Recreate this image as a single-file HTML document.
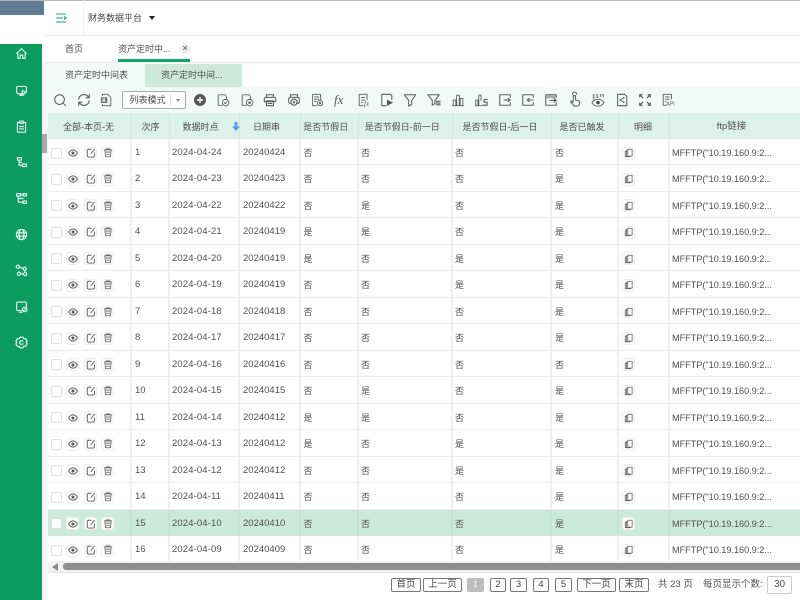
<!DOCTYPE html>
<html lang="zh"><head><meta charset="utf-8"><title>财务数据平台</title>
<style>
*{box-sizing:border-box}
html,body{margin:0;padding:0;width:800px;height:600px;overflow:hidden;background:#fff}
body{position:relative;font-family:"Liberation Sans","Noto Sans CJK SC",sans-serif;font-size:9px;color:#4f4f4f}
.a{position:absolute;white-space:nowrap}
svg{display:block;overflow:visible}
.s{fill:none;stroke:#5c5c5c;stroke-width:1;stroke-linecap:round;stroke-linejoin:round}
.w{fill:none;stroke:#e4f5ee;stroke-width:1.4;stroke-linecap:round;stroke-linejoin:round}
.tb{position:absolute;top:93px;width:14px;height:14px;margin-left:1px}
.nav{position:absolute;left:15px;width:13px;height:13px;margin-top:1.500px}
#hd,.r{position:absolute;left:48px;width:752px;display:flex}
#hd{top:113px;height:26px;background:#dcf1e9;color:#4f4f4f}
#hd span{display:block;height:26px;line-height:28px;text-align:center;border-right:1px solid #cfe5dc;flex:none}
.r{height:26.47px;background:#fff;border-bottom:1px solid #eee;line-height:28px;font-size:9.5px}
.r>span{display:block;flex:none;height:100%;border-right:2px solid #efefef;padding-left:3px}
.r.sel{background:#cbe9dd;border-bottom-color:#cbe9dd}
.r.sel>span{border-right-color:#c3e2d6}
.c1{width:84px}.c2{width:38px}.c3{width:70px}.c4{width:61px}.c5{width:57.500px}.c6{width:94.500px}.c7{width:99px}.c8{width:67px}.c9{width:51px}.c10{width:130px}
.r>span.c1{padding:0;position:relative}
.cb{position:absolute;left:3px;top:8.500px;width:11px;height:11px;border:1px solid #e0e0e0;border-radius:2px;background:#fff}
.b{position:absolute;top:7.500px;width:13px;height:13px;border:1px solid #eee;border-radius:3px;background:#fcfcfc;padding:.5px}
.b svg{width:10px;height:10px}
.b1{left:18px}.b2{left:36px}.b3{left:53px}
.r>span.c9{position:relative}
.r .b4{left:3px}
.r>span.c10{border:0;padding-left:2px;font-size:9.200px;letter-spacing:-.04px}
.r>span.c3{padding-left:2px;letter-spacing:.12px}
.r>span.c5,.r>span.c6{padding-left:2.500px}
.r>span.c7{padding-left:2px}
.zh{font-size:9px}
.pg{position:absolute;top:578px;height:14px;line-height:12px;border:1px solid #777;border-radius:2px;text-align:center;background:#fff;color:#444;font-size:9.500px}
</style></head><body>
<svg width="0" height="0" style="position:absolute">
<defs>
<symbol id="eye" viewBox="0 0 16 16"><path class="s" style="stroke-width:1.500" d="M1 8c2-3.500 4.500-5 7-5s5 1.500 7 5c-2 3.500-4.500 5-7 5s-5-1.500-7-5z"/><circle cx="8" cy="8" r="2.500" fill="#5c5c5c"/></symbol>
<symbol id="edit" viewBox="0 0 16 16"><path class="s" style="stroke-width:1.500" d="M8 2H3.500L2 3.500V13l1.500 1.500H12l1.500-1.500V8M8 9l5.500-7"/></symbol>
<symbol id="del" viewBox="0 0 16 16"><path class="s" style="stroke-width:1.300" d="M2 3h12M3 3l1 11h8l1-11M5 6.500h6M5.500 10h5M5 3V1.500h6V3"/></symbol>
<symbol id="cp" viewBox="0 0 16 16"><path class="s" style="stroke-width:1.200" d="M6 2h7v11H6zM6 4H4v10h6M4 5H2v9h5"/></symbol>
</defs>
</svg>

<!-- frame -->
<div class="a" style="left:0;top:0;width:800px;height:1px;background:#b5b9bd"></div>
<div class="a" style="left:0;top:1px;width:44px;height:14px;background:#607b92"></div>
<div class="a" style="left:0;top:44px;width:42px;height:556px;background:#0c9c60"></div>
<div class="a" style="left:42px;top:63px;width:6px;height:537px;background:#f3f5f9"></div>
<div class="a" style="left:44px;top:35px;width:756px;height:1px;background:#eee"></div>
<div class="a" style="left:83px;top:0;width:1px;height:35px;background:#f0f0f0"></div>
<svg class="a" style="left:55px;top:12px;width:12px;height:12px" viewBox="0 0 12 12"><path d="M1 2h10M1 6h7M1 10h10M9 4.500l2 1.500-2 1.500" fill="none" stroke="#16a56c" stroke-width="1.100"/></svg>
<div class="a" style="left:88px;top:12px;line-height:13px;color:#444">财务数据平台</div>
<div class="a" style="left:149px;top:16px;border:3.500px solid transparent;border-top:4px solid #222;border-bottom:0"></div>

<!-- tabs -->
<div class="a" style="left:65px;top:43px;line-height:13px">首页</div>
<div class="a" style="left:118px;top:43px;line-height:13px">资产定时中...</div>
<div class="a" style="left:180px;top:44px;width:10px;height:10px;border-radius:5px;background:#eee;color:#444;font-size:9px;line-height:9px;text-align:center">×</div>
<div class="a" style="left:118px;top:59px;width:72px;height:3px;background:#0fa765"></div>
<div class="a" style="left:44px;top:62px;width:756px;height:1px;background:#eef0f0"></div>
<div class="a" style="left:48px;top:64px;width:97px;height:23px;background:#f3f9f7;line-height:22px;text-align:center">资产定时中间表</div>
<div class="a" style="left:145px;top:64px;width:97px;height:23px;background:#cde8dc;line-height:22px;padding-left:16px">资产定时中间...</div>
<div class="a" style="left:48px;top:87px;width:752px;height:26px;background:#f3f9f7"></div>
<div class="a" style="left:42px;top:134px;width:5px;height:19px;background:#a9a9a9"></div>

<!-- sidebar icons -->
<svg class="nav" style="top:45px" viewBox="0 0 16 16"><path class="w" d="M2 8l6-6 6 6M3.500 7v7h3v-4h3v4h3V7"/></svg>
<svg class="nav" style="top:82px" viewBox="0 0 16 16"><path class="w" d="M12 12H3.500L2 10.500V4l1-1h10l1 1v5M6 14h4M8 12v2"/><path class="w" d="M9 8l5 2.500-5 2.500z"/></svg>
<svg class="nav" style="top:118px" viewBox="0 0 16 16"><path class="w" d="M5 3H3v12h10V3h-2M5.500 1.500h5V4h-5zM5.500 8h5M5.500 11h5"/></svg>
<svg class="nav" style="top:154px" viewBox="0 0 16 16"><path class="w" d="M3 2h5v3H3zM9 10h5v3H9zM5 5v6.500h4M5 8h3"/></svg>
<svg class="nav" style="top:190px" viewBox="0 0 16 16"><path class="w" d="M2 2h5v3H2zM10 2h4v3h-4zM10 11h4v3h-4zM4 5v7.500h6M4 8h6M7 3.500h3"/></svg>
<svg class="nav" style="top:226px" viewBox="0 0 16 16"><circle class="w" cx="8" cy="8" r="6.300"/><ellipse class="w" cx="8" cy="8" rx="3" ry="6.300"/><path class="w" d="M2 6h12M2 10h12"/></svg>
<svg class="nav" style="top:262px" viewBox="0 0 16 16"><circle class="w" cx="3.500" cy="3.500" r="2"/><circle class="w" cx="12" cy="6" r="2"/><circle class="w" cx="5" cy="12" r="2"/><circle class="w" cx="12.500" cy="12.500" r="2"/><path class="w" d="M5.500 3.500l4.500 2M7 12h3.500M12 8v2.500"/></svg>
<svg class="nav" style="top:298px" viewBox="0 0 16 16"><path class="w" d="M8 13H3l-1-1V3.500l1-1h10l1 1V8M5 15h4"/><circle class="w" cx="12" cy="11.500" r="2.800"/><path class="w" d="M10.500 13l3-3"/></svg>
<svg class="nav" style="top:334px" viewBox="0 0 16 16"><path class="w" d="M6 1.500h4l.8 2 2.200-.3 2 3.300-1.400 1.500 1.400 1.500-2 3.300-2.200-.3-.8 2H6l-.8-2-2.200.3-2-3.300L2.400 8 1 6.500l2-3.300 2.200.3z"/><path class="w" d="M9.800 6.500a2.300 2.300 0 1 0 0 3"/></svg>

<!-- toolbar -->
<svg class="tb" style="left:52px" viewBox="0 0 16 16"><circle class="s" cx="7.500" cy="7.500" r="5.500" style="stroke-width:1.200"/><path class="s" d="M11.500 11.500L14.500 14.500" style="stroke-width:1.200"/></svg>
<svg class="tb" style="left:76px" viewBox="0 0 16 16"><path class="s" style="stroke-width:1.300" d="M2 7a6 6 0 0 1 10.500-3L14 5.500M14 2v3.500h-3.500M14 9a6 6 0 0 1-10.500 3L2 10.500M2 14v-3.500h3.500"/></svg>
<svg class="tb" style="left:98px" viewBox="0 0 16 16"><path class="s" d="M4 3V1.500h6L13.500 5v9.500H4V13"/><rect x="2" y="5" width="7.500" height="6.500" fill="#777"/><path d="M4 6.500l3 3.500M7 6.500l-3 3.500" stroke="#fff" fill="none"/></svg>
<div class="a" style="left:121.500px;top:91px;width:64px;height:18px;border:1px solid #aaa;border-radius:2px;background:#fff;line-height:16px;padding-left:7px">列表模式</div>
<div class="a" style="left:170px;top:94px;width:1px;height:12px;background:#ddd"></div>
<div class="a" style="left:176px;top:99px;border:2.500px solid transparent;border-top:3px solid #888;border-bottom:0"></div>
<svg class="tb" style="left:192px" viewBox="0 0 16 16"><circle cx="8" cy="8" r="6.800" fill="#555"/><path d="M8 4.500v7M4.500 8h7" stroke="#fff" stroke-width="1.600"/></svg>
<svg class="tb" style="left:215px" viewBox="0 0 16 16"><path class="s" d="M7 14H2.500V2h8l1.500 2v3.500"/><circle class="s" cx="11" cy="11" r="3.800"/><path class="s" d="M9.300 11l1.300 1.300 2-2.300"/></svg>
<svg class="tb" style="left:239px" viewBox="0 0 16 16"><path class="s" d="M7 14H2.500V2h8l1.500 2v3.500"/><circle class="s" cx="11" cy="11" r="3.800"/><circle cx="11" cy="11" r="1.500" fill="#5c5c5c"/></svg>
<svg class="tb" style="left:262px" viewBox="0 0 16 16"><path class="s" style="stroke-width:1.200" d="M4 5V2h8v3M1.500 10V6l1-1h11l1 1v4zM4 9h8v5.500H4zM6 12h4"/></svg>
<svg class="tb" style="left:286px" viewBox="0 0 16 16"><path class="s" style="stroke-width:1.200" d="M4 5V2h8v3M2 11V6l1-1h10l1 1v5l-1 1H11M5 12H3"/><circle class="s" cx="8" cy="10.500" r="3.500" style="stroke-width:1.300"/><circle cx="8" cy="10.500" r="1.300" fill="#5c5c5c"/></svg>
<svg class="tb" style="left:309px" viewBox="0 0 16 16"><path class="s" d="M8 14.500H3V1.500h9v6M5 4.500h5M5 7h5M5 9.500h2"/><circle class="s" cx="11.500" cy="11.500" r="3"/><circle cx="11.500" cy="11.500" r="1.300" fill="#5c5c5c"/></svg>
<div class="a" style="left:334px;top:92px;font:italic 13px/16px 'Liberation Serif',serif;color:#5c5c5c">fx</div>
<svg class="tb" style="left:356px" viewBox="0 0 16 16"><path class="s" d="M7 14.500H2.500V1.500h9v6M5 5h4M5 8h4M5 11h1"/><text x="8" y="15" font-size="8" font-style="italic" font-family="Liberation Serif,serif" fill="#555">fx</text></svg>
<svg class="tb" style="left:379px" viewBox="0 0 16 16"><path class="s" style="stroke-width:1.200" d="M7 14.500H2V1.500h10l1.500 1.500v4.500"/><path d="M8 7.500l7 3.500-7 3.500z" fill="#555"/></svg>
<svg class="tb" style="left:402px" viewBox="0 0 16 16"><path class="s" style="stroke-width:1.200" d="M1.500 2h13L10 8.500v4.500l-3.500 2V8.500z"/></svg>
<svg class="tb" style="left:426px" viewBox="0 0 16 16"><path class="s" style="stroke-width:1.200" d="M1 2h13L9 8.500v3.500l-3 2V8.500zM10.500 9.500H15M10.500 11.500H15M10.500 13.500H15"/></svg>
<svg class="tb" style="left:450px" viewBox="0 0 16 16"><path class="s" d="M1.500 14.500h13M2.500 14.500V8h3v6.500M6.500 14.500V2.500h3v12M10.500 14.500V6h3v8.500"/></svg>
<svg class="tb" style="left:473px" viewBox="0 0 16 16"><path class="s" d="M1.500 14.500h7M2 14.500V8h2.500v6.500M5.500 14.500V2.500H8v6"/><path class="s" style="stroke-width:1.300" d="M15 7.500h-3.500v3H15v3.500h-5"/></svg>
<svg class="tb" style="left:497px" viewBox="0 0 16 16"><path class="s" style="stroke-width:1.200" d="M14 5V2H2v12h12v-3"/><path class="s" style="stroke-width:1.200" d="M7 8h7M11.500 6l2.500 2-2.500 2"/></svg>
<svg class="tb" style="left:520px" viewBox="0 0 16 16"><path class="s" style="stroke-width:1.200" d="M14 5V2H2v12h12v-3"/><path class="s" style="stroke-width:1.200" d="M14 8H7M9.500 6L7 8l2.500 2"/></svg>
<svg class="tb" style="left:543px" viewBox="0 0 16 16"><path class="s" style="stroke-width:1.200" d="M14 5V2H2v12h12v-3"/><path d="M2.500 2.500h11V6h-11z" fill="#aaa"/><path class="s" style="stroke-width:1.200" d="M7 8.500h7M11.500 6.500l2.500 2-2.500 2"/></svg>
<svg class="tb" style="left:567px" viewBox="0 0 16 16"><path class="s" style="stroke-width:1.200" d="M5 1.500a2.500 2.500 0 0 1 5 0M6 3h2.500v5l4 1 1 1.500-.5 3-2 1.500H7l-4-5 1-1 2 1.500z"/></svg>
<svg class="tb" style="left:590px" viewBox="0 0 16 16"><path d="M3 1.500v6M7 1.500v5M11 1.500v3M14 1.500v3" stroke="#444" stroke-width="1.800" stroke-dasharray="1.500 1" fill="none"/><path class="s" d="M1 11c2-3 4.500-4 7-4s5 1 7 4c-2 3-4.500 4-7 4s-5-1-7-4z"/><circle cx="8" cy="11" r="2" fill="#444"/></svg>
<svg class="tb" style="left:614px" viewBox="0 0 16 16"><path class="s" style="stroke-width:1.200" d="M3 1.500h8l2.500 2.500v10.500H3z"/><path class="s" d="M10 5.500L6 8l4 2.500"/><circle cx="10" cy="5.500" r="1" fill="#5c5c5c"/><circle cx="6" cy="8" r="1" fill="#5c5c5c"/><circle cx="10" cy="10.500" r="1" fill="#5c5c5c"/></svg>
<svg class="tb" style="left:637px" viewBox="0 0 16 16"><path class="s" style="stroke-width:1.400" d="M2 2l3.500 3.500M14 2l-3.500 3.500M2 14l3.500-3.500M14 14l-3.500-3.500M2 2h2.500M2 2v2.500M14 2h-2.500M14 2v2.500M2 14h2.500M2 14v-2.500M14 14h-2.500M14 14v-2.500"/></svg>
<svg class="tb" style="left:660px" viewBox="0 0 16 16"><path class="s" d="M6 14H2.500V1.500H12V7M5 4.500h4.500M5 7h4.500M5 10h1"/><text x="6" y="14.500" font-size="6" font-family="Liberation Sans,sans-serif" fill="#555">API</text></svg>

<!-- table -->
<div id="hd">
<span class="c1" style="padding-right:2px">全部-本页-无</span><span class="c2">次序</span><span class="c3" style="position:relative;padding-right:8px">数据时点<svg class="a" style="left:62px;top:9px;width:8px;height:9px" viewBox="0 0 8 9"><path d="M2.500 0h3v4.500H8L4 9 0 4.500h2.500z" fill="#5d9ce8"/></svg></span><span class="c4" style="text-align:left;padding-left:13px">日期串</span><span class="c5" style="padding-right:7px">是否节假日</span><span class="c6" style="padding-right:6px">是否节假日-前一日</span><span class="c7" style="padding-right:4px">是否节假日-后一日</span><span class="c8" style="padding-right:6px">是否已触发</span><span class="c9" style="padding-right:2px">明细</span><span class="c10" style="border:0;font-size:9.500px;padding-right:7px">ftp链接</span>
</div>

<div class="r" style="top:139px"><span class="c1"><i class="cb"></i><i class="b b1"><svg><use href="#eye"/></svg></i><i class="b b2"><svg><use href="#edit"/></svg></i><i class="b b3"><svg><use href="#del"/></svg></i></span><span class="c2">1</span><span class="c3">2024-04-24</span><span class="c4">20240424</span><span class="c5 zh">否</span><span class="c6 zh">否</span><span class="c7 zh">否</span><span class="c8 zh">否</span><span class="c9"><i class="b b4"><svg><use href="#cp"/></svg></i></span><span class="c10">MFFTP("10.19.160.9:2...</span></div>
<div class="r" style="top:165.47px"><span class="c1"><i class="cb"></i><i class="b b1"><svg><use href="#eye"/></svg></i><i class="b b2"><svg><use href="#edit"/></svg></i><i class="b b3"><svg><use href="#del"/></svg></i></span><span class="c2">2</span><span class="c3">2024-04-23</span><span class="c4">20240423</span><span class="c5 zh">否</span><span class="c6 zh">否</span><span class="c7 zh">否</span><span class="c8 zh">是</span><span class="c9"><i class="b b4"><svg><use href="#cp"/></svg></i></span><span class="c10">MFFTP("10.19.160.9:2...</span></div>
<div class="r" style="top:191.94px"><span class="c1"><i class="cb"></i><i class="b b1"><svg><use href="#eye"/></svg></i><i class="b b2"><svg><use href="#edit"/></svg></i><i class="b b3"><svg><use href="#del"/></svg></i></span><span class="c2">3</span><span class="c3">2024-04-22</span><span class="c4">20240422</span><span class="c5 zh">否</span><span class="c6 zh">是</span><span class="c7 zh">否</span><span class="c8 zh">是</span><span class="c9"><i class="b b4"><svg><use href="#cp"/></svg></i></span><span class="c10">MFFTP("10.19.160.9:2...</span></div>
<div class="r" style="top:218.41px"><span class="c1"><i class="cb"></i><i class="b b1"><svg><use href="#eye"/></svg></i><i class="b b2"><svg><use href="#edit"/></svg></i><i class="b b3"><svg><use href="#del"/></svg></i></span><span class="c2">4</span><span class="c3">2024-04-21</span><span class="c4">20240419</span><span class="c5 zh">是</span><span class="c6 zh">是</span><span class="c7 zh">否</span><span class="c8 zh">是</span><span class="c9"><i class="b b4"><svg><use href="#cp"/></svg></i></span><span class="c10">MFFTP("10.19.160.9:2...</span></div>
<div class="r" style="top:244.88px"><span class="c1"><i class="cb"></i><i class="b b1"><svg><use href="#eye"/></svg></i><i class="b b2"><svg><use href="#edit"/></svg></i><i class="b b3"><svg><use href="#del"/></svg></i></span><span class="c2">5</span><span class="c3">2024-04-20</span><span class="c4">20240419</span><span class="c5 zh">是</span><span class="c6 zh">否</span><span class="c7 zh">是</span><span class="c8 zh">是</span><span class="c9"><i class="b b4"><svg><use href="#cp"/></svg></i></span><span class="c10">MFFTP("10.19.160.9:2...</span></div>
<div class="r" style="top:271.35px"><span class="c1"><i class="cb"></i><i class="b b1"><svg><use href="#eye"/></svg></i><i class="b b2"><svg><use href="#edit"/></svg></i><i class="b b3"><svg><use href="#del"/></svg></i></span><span class="c2">6</span><span class="c3">2024-04-19</span><span class="c4">20240419</span><span class="c5 zh">否</span><span class="c6 zh">否</span><span class="c7 zh">是</span><span class="c8 zh">是</span><span class="c9"><i class="b b4"><svg><use href="#cp"/></svg></i></span><span class="c10">MFFTP("10.19.160.9:2...</span></div>
<div class="r" style="top:297.82px"><span class="c1"><i class="cb"></i><i class="b b1"><svg><use href="#eye"/></svg></i><i class="b b2"><svg><use href="#edit"/></svg></i><i class="b b3"><svg><use href="#del"/></svg></i></span><span class="c2">7</span><span class="c3">2024-04-18</span><span class="c4">20240418</span><span class="c5 zh">否</span><span class="c6 zh">否</span><span class="c7 zh">否</span><span class="c8 zh">是</span><span class="c9"><i class="b b4"><svg><use href="#cp"/></svg></i></span><span class="c10">MFFTP("10.19.160.9:2...</span></div>
<div class="r" style="top:324.29px"><span class="c1"><i class="cb"></i><i class="b b1"><svg><use href="#eye"/></svg></i><i class="b b2"><svg><use href="#edit"/></svg></i><i class="b b3"><svg><use href="#del"/></svg></i></span><span class="c2">8</span><span class="c3">2024-04-17</span><span class="c4">20240417</span><span class="c5 zh">否</span><span class="c6 zh">否</span><span class="c7 zh">否</span><span class="c8 zh">是</span><span class="c9"><i class="b b4"><svg><use href="#cp"/></svg></i></span><span class="c10">MFFTP("10.19.160.9:2...</span></div>
<div class="r" style="top:350.76px"><span class="c1"><i class="cb"></i><i class="b b1"><svg><use href="#eye"/></svg></i><i class="b b2"><svg><use href="#edit"/></svg></i><i class="b b3"><svg><use href="#del"/></svg></i></span><span class="c2">9</span><span class="c3">2024-04-16</span><span class="c4">20240416</span><span class="c5 zh">否</span><span class="c6 zh">否</span><span class="c7 zh">否</span><span class="c8 zh">否</span><span class="c9"><i class="b b4"><svg><use href="#cp"/></svg></i></span><span class="c10">MFFTP("10.19.160.9:2...</span></div>
<div class="r" style="top:377.23px"><span class="c1"><i class="cb"></i><i class="b b1"><svg><use href="#eye"/></svg></i><i class="b b2"><svg><use href="#edit"/></svg></i><i class="b b3"><svg><use href="#del"/></svg></i></span><span class="c2">10</span><span class="c3">2024-04-15</span><span class="c4">20240415</span><span class="c5 zh">否</span><span class="c6 zh">是</span><span class="c7 zh">否</span><span class="c8 zh">是</span><span class="c9"><i class="b b4"><svg><use href="#cp"/></svg></i></span><span class="c10">MFFTP("10.19.160.9:2...</span></div>
<div class="r" style="top:403.7px"><span class="c1"><i class="cb"></i><i class="b b1"><svg><use href="#eye"/></svg></i><i class="b b2"><svg><use href="#edit"/></svg></i><i class="b b3"><svg><use href="#del"/></svg></i></span><span class="c2">11</span><span class="c3">2024-04-14</span><span class="c4">20240412</span><span class="c5 zh">是</span><span class="c6 zh">是</span><span class="c7 zh">否</span><span class="c8 zh">是</span><span class="c9"><i class="b b4"><svg><use href="#cp"/></svg></i></span><span class="c10">MFFTP("10.19.160.9:2...</span></div>
<div class="r" style="top:430.17px"><span class="c1"><i class="cb"></i><i class="b b1"><svg><use href="#eye"/></svg></i><i class="b b2"><svg><use href="#edit"/></svg></i><i class="b b3"><svg><use href="#del"/></svg></i></span><span class="c2">12</span><span class="c3">2024-04-13</span><span class="c4">20240412</span><span class="c5 zh">是</span><span class="c6 zh">否</span><span class="c7 zh">是</span><span class="c8 zh">是</span><span class="c9"><i class="b b4"><svg><use href="#cp"/></svg></i></span><span class="c10">MFFTP("10.19.160.9:2...</span></div>
<div class="r" style="top:456.64px"><span class="c1"><i class="cb"></i><i class="b b1"><svg><use href="#eye"/></svg></i><i class="b b2"><svg><use href="#edit"/></svg></i><i class="b b3"><svg><use href="#del"/></svg></i></span><span class="c2">13</span><span class="c3">2024-04-12</span><span class="c4">20240412</span><span class="c5 zh">否</span><span class="c6 zh">否</span><span class="c7 zh">是</span><span class="c8 zh">是</span><span class="c9"><i class="b b4"><svg><use href="#cp"/></svg></i></span><span class="c10">MFFTP("10.19.160.9:2...</span></div>
<div class="r" style="top:483.11px"><span class="c1"><i class="cb"></i><i class="b b1"><svg><use href="#eye"/></svg></i><i class="b b2"><svg><use href="#edit"/></svg></i><i class="b b3"><svg><use href="#del"/></svg></i></span><span class="c2">14</span><span class="c3">2024-04-11</span><span class="c4">20240411</span><span class="c5 zh">否</span><span class="c6 zh">否</span><span class="c7 zh">否</span><span class="c8 zh">是</span><span class="c9"><i class="b b4"><svg><use href="#cp"/></svg></i></span><span class="c10">MFFTP("10.19.160.9:2...</span></div>
<div class="r sel" style="top:509.58px"><span class="c1"><i class="cb"></i><i class="b b1"><svg><use href="#eye"/></svg></i><i class="b b2"><svg><use href="#edit"/></svg></i><i class="b b3"><svg><use href="#del"/></svg></i></span><span class="c2">15</span><span class="c3">2024-04-10</span><span class="c4">20240410</span><span class="c5 zh">否</span><span class="c6 zh">否</span><span class="c7 zh">否</span><span class="c8 zh">是</span><span class="c9"><i class="b b4"><svg><use href="#cp"/></svg></i></span><span class="c10">MFFTP("10.19.160.9:2...</span></div>
<div class="r" style="top:536.05px;border:0"><span class="c1"><i class="cb"></i><i class="b b1"><svg><use href="#eye"/></svg></i><i class="b b2"><svg><use href="#edit"/></svg></i><i class="b b3"><svg><use href="#del"/></svg></i></span><span class="c2">16</span><span class="c3">2024-04-09</span><span class="c4">20240409</span><span class="c5 zh">否</span><span class="c6 zh">否</span><span class="c7 zh">否</span><span class="c8 zh">是</span><span class="c9"><i class="b b4"><svg><use href="#cp"/></svg></i></span><span class="c10">MFFTP("10.19.160.9:2...</span></div>

<!-- scrollbar -->
<div class="a" style="left:48px;top:561px;width:752px;height:12px;background:#f2f2f2;border-bottom:1px solid #e2e2e2"></div>
<div class="a" style="left:52px;top:563px;border:4px solid transparent;border-right:6px solid #8a8a8a;border-left:0"></div>
<div class="a" style="left:63px;top:563px;width:737px;height:7px;background:#8e8e8e;border-radius:3px 0 0 3px"></div>

<!-- pagination -->
<div class="pg" style="left:391px;width:30px">首页</div>
<div class="pg" style="left:423px;width:39px">上一页</div>
<div class="pg" style="left:467px;width:17px;background:#bdbdbd;border-color:#bdbdbd;color:#f2f2f2">1</div>
<div class="pg" style="left:490px;width:16px">2</div>
<div class="pg" style="left:510px;width:17px">3</div>
<div class="pg" style="left:533px;width:16px">4</div>
<div class="pg" style="left:555px;width:17px">5</div>
<div class="pg" style="left:577px;width:39px">下一页</div>
<div class="pg" style="left:619px;width:30px">末页</div>
<div class="a" style="left:658px;top:579px;line-height:12px;font-size:9.500px">共 23 页</div>
<div class="a" style="left:703px;top:579px;line-height:12px;font-size:9.500px">每页显示个数:</div>
<div class="a" style="left:767px;top:575.500px;width:25px;height:18px;border:1px solid #ccc;border-radius:2px;line-height:16px;text-align:center;font-size:10px">30</div>
</body></html>
